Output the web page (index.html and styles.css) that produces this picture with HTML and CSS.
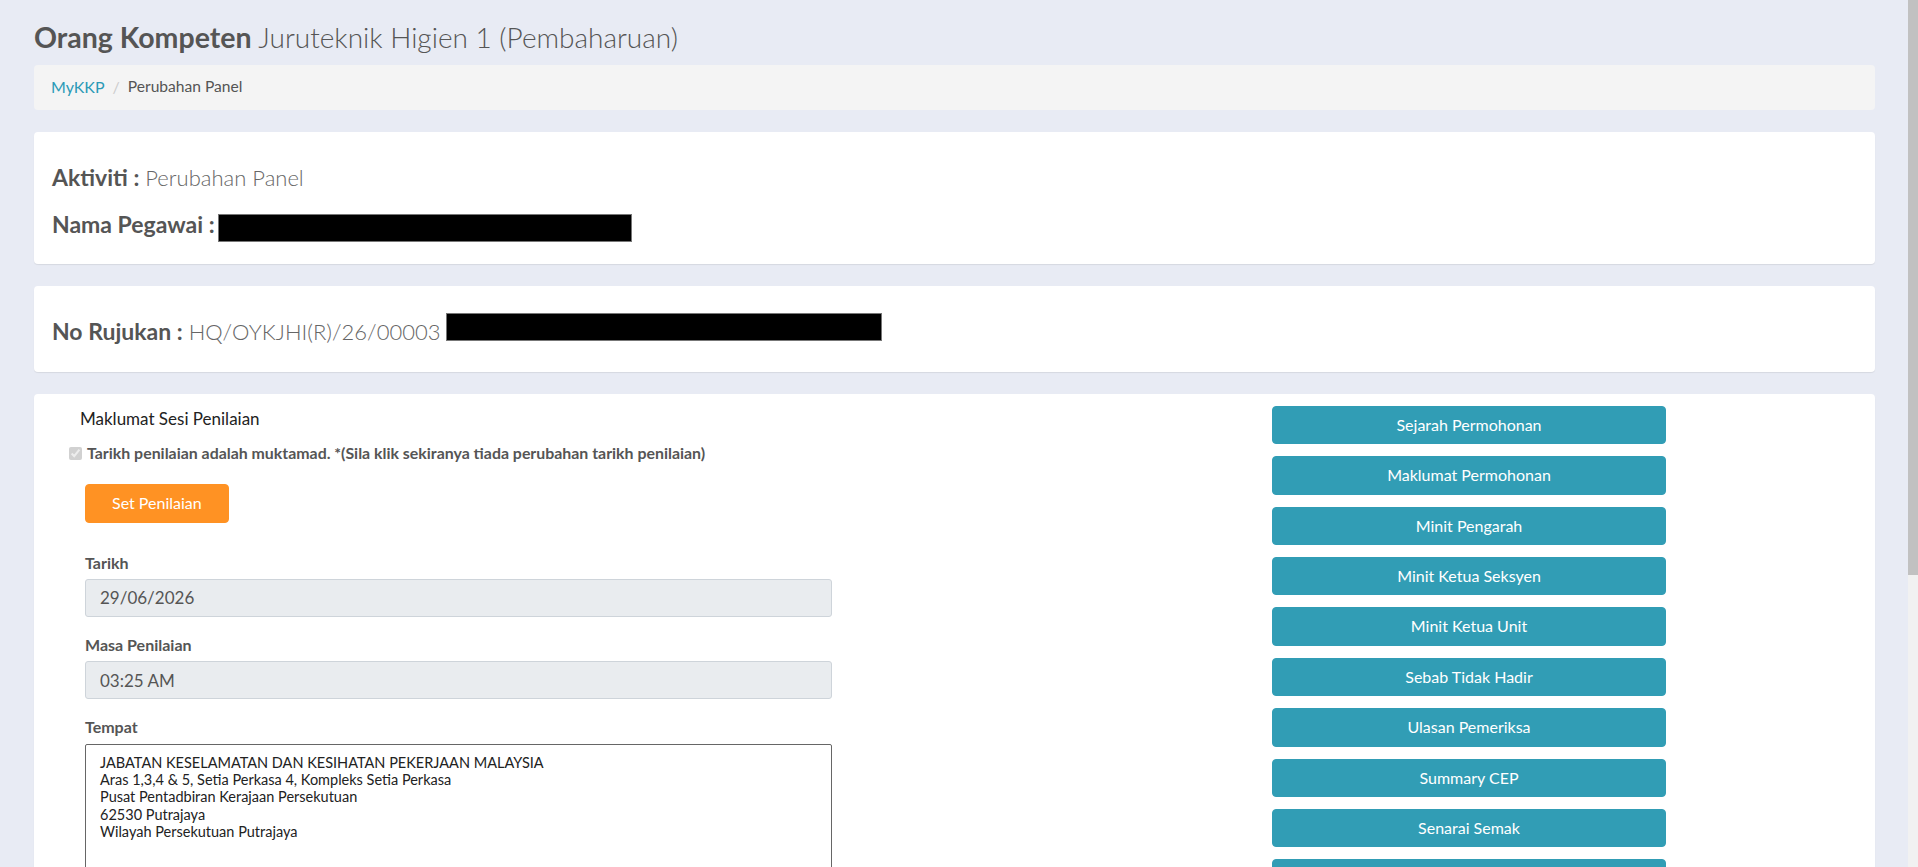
FILE: index.html
```html
<!DOCTYPE html>
<html lang="ms">
<head>
  <meta charset="UTF-8">
  <title>MyKKP - Perubahan Panel</title>
  <link rel="stylesheet" href="styles.css">
</head>
<body>

  <div class="page">
    <h3 class="page-title"><strong>Orang Kompeten</strong> Juruteknik Higien 1 (Pembaharuan)</h3>

    <!-- breadcrumb -->
    <ol class="breadcrumb">
      <li><a href="#">MyKKP</a></li>
      <li class="sep">/</li>
      <li class="current">Perubahan Panel</li>
    </ol>

    <!-- maklumat aktiviti -->
    <div class="card card-info">
      <h4 class="info-line"><b>Aktiviti :</b> Perubahan Panel</h4>
      <h4 class="info-line"><b>Nama Pegawai :</b> <span class="redact redact-name"></span></h4>
    </div>

    <div class="card card-info">
      <h4 class="info-line"><b>No Rujukan :</b> HQ/OYKJHI(R)/26/00003<span class="redact redact-ref"></span></h4>
    </div>

    <!-- sesi penilaian -->
    <div class="card card-sesi">
      <div class="sesi-left">
        <p class="sesi-title">Maklumat Sesi Penilaian</p>
        <label class="check-row">
          <input type="checkbox" checked disabled>
          Tarikh penilaian adalah muktamad. *(Sila klik sekiranya tiada perubahan tarikh penilaian)
        </label>

        <div class="sesi-form">
          <button class="btn btn-orange" type="button">Set Penilaian</button>

          <div class="form-group">
            <label for="tarikh">Tarikh</label>
            <input class="form-control" id="tarikh" type="text" value="29/06/2026" disabled>
          </div>

          <div class="form-group">
            <label for="masa">Masa Penilaian</label>
            <input class="form-control" id="masa" type="text" value="03:25 AM" disabled>
          </div>

          <div class="form-group">
            <label for="tempat">Tempat</label>
            <textarea class="form-control textarea" id="tempat" rows="9">JABATAN KESELAMATAN DAN KESIHATAN PEKERJAAN MALAYSIA
Aras 1,3,4 &amp; 5, Setia Perkasa 4, Kompleks Setia Perkasa
Pusat Pentadbiran Kerajaan Persekutuan
62530 Putrajaya
Wilayah Persekutuan Putrajaya</textarea>
          </div>
        </div>
      </div>

      <div class="sesi-right">
        <button class="btn btn-teal" type="button">Sejarah Permohonan</button>
        <button class="btn btn-teal" type="button">Maklumat Permohonan</button>
        <button class="btn btn-teal" type="button">Minit Pengarah</button>
        <button class="btn btn-teal" type="button">Minit Ketua Seksyen</button>
        <button class="btn btn-teal" type="button">Minit Ketua Unit</button>
        <button class="btn btn-teal" type="button">Sebab Tidak Hadir</button>
        <button class="btn btn-teal" type="button">Ulasan Pemeriksa</button>
        <button class="btn btn-teal" type="button">Summary CEP</button>
        <button class="btn btn-teal" type="button">Senarai Semak</button>
        <button class="btn btn-teal" type="button">Keputusan Penilaian</button>
        <button class="btn btn-teal" type="button">Surat Panggilan</button>
        <button class="btn btn-teal" type="button">Kembali</button>
      </div>
    </div>
  </div>

  <!-- window scrollbar (the browser hides its own) -->
  <div class="scrollbar"><div class="scrollbar-thumb"></div></div>

</body>
</html>
```

FILE: styles.css
```css
body { margin: 0; background: #e8ebf4; color: #555; font-family: Lato, "Open Sans", Arial, sans-serif; font-size: 15px; }

.page { padding: 0 43px 22px 34px; }

.scrollbar { position: fixed; top: 0; right: 0; width: 10px; height: 100vh; background: #f1f1f1; }
.scrollbar-thumb { height: 575px; background: #c1c1c1; }

.page-title { margin: 20px 0 10px; font-size: 28px; line-height: 1.2; font-weight: 300; color: #555; }
.page-title strong { font-weight: 700; font-size: 28.5px; }

.breadcrumb { display: flex; list-style: none; margin: 0 0 22px; padding: 10.5px 17px; background: #f4f4f4; border-radius: 4px; font-size: 16px; line-height: 1.5; }
.breadcrumb a { color: #2b9ab7; text-decoration: none; }
.breadcrumb .sep { color: #ccc; padding: 0 8px; }
.breadcrumb .current { color: #555; font-size: 15.6px; }

.card { background: #fff; border-radius: 4px; box-shadow: 0 1px 1px rgba(0, 0, 0, .08); margin-bottom: 22px; }
.card-info { padding: 33px 18px 18px; }
.info-line { margin: 0 0 21px; font-size: 22px; line-height: 1.2; font-weight: 300; color: #666; }
.info-line:last-child { margin-bottom: 8px; }
.info-line b { font-weight: 700; font-size: 23px; line-height: 1; color: #555; }
.redact { display: inline-block; height: 26px; background: #000; border: 1px solid #777; }
.redact-name { width: 412px; vertical-align: -4px; margin: -8px 0 -5px -3px; }
.redact-ref { width: 434px; vertical-align: -1px; margin: -8px 0 0 6px; }

.card-sesi { box-sizing: border-box; min-height: 890px; display: grid; grid-template-columns: 1203px 394px; align-items: start; padding: 12px 35px 30px; }
.sesi-title { margin: 0 0 10px 11px; font-size: 17px; line-height: 1.5; color: #222; }
.check-row { display: flex; align-items: center; gap: 5px; font-size: 15.9px; line-height: 1.5; font-weight: 700; color: #555; }
.check-row input { margin: 0; width: 13px; height: 13px; }

.sesi-form { padding-left: 16px; width: 747px; }
.btn { display: block; font-family: inherit; font-size: 16px; line-height: 1.4; padding: 7px 26px; border: 1px solid transparent; border-radius: 4px; color: #fff; cursor: pointer; }
.btn-orange { background: #ff9223; border-color: #ff9223; margin: 19px 0 29px; }
.btn-teal { width: 100%; background: #319db5; border-color: #319db5; margin-bottom: 12px; }

.form-group { margin-bottom: 17px; }
.form-group label { display: block; font-weight: 700; font-size: 16px; line-height: 1.4; margin-bottom: 5px; color: #555; }
.form-control { box-sizing: border-box; width: 100%; height: 38px; padding: 0 14px; font-family: inherit; font-size: 17px; color: #555; background: #e9ecef; border: 1px solid #ced4da; border-radius: 3px; }
.textarea { height: auto; padding: 9px 14px; font-size: 14.5px; line-height: 17.3px; color: #222; background: #fff; border: 1px solid #666; border-radius: 2px; resize: vertical; }
```
